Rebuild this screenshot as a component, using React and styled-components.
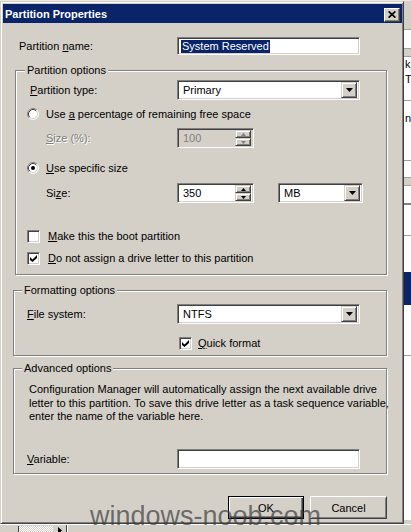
import React from "react";
import styled, { createGlobalStyle, css } from "styled-components";

const GlobalStyle = createGlobalStyle`
  html, body {
    margin: 0;
    padding: 0;
    background: #d4d0c8;
  }
  body {
    font-family: "Liberation Sans", Arial, sans-serif;
    font-size: 11px;
    color: #000;
  }
`;

const raised = css`
  background: #d4d0c8;
  border: 1px solid;
  border-color: #d4d0c8 #404040 #404040 #d4d0c8;
  box-shadow: inset 1px 1px #fff, inset -1px -1px #808080;
`;

const sunken = css`
  border: 1px solid;
  border-color: #808080 #fff #fff #808080;
  box-shadow: inset 1px 1px #404040, inset -1px -1px #d4d0c8;
`;

// bands of the window that sits behind the dialog
const backdropBands = [
  { h: 28, bg: "#d4d0c8" },
  { h: 19, bg: "#fff", line: true },
  { h: 8, bg: "#d4d0c8", line: true },
  { h: 44, bg: "#fff", line: true, text: ["k", "T"], pad: 0 },
  { h: 60, bg: "#fff", line: true, text: ["n"], pad: 10 },
  { h: 17, bg: "#fff", line: true },
  { h: 8, bg: "#d4d0c8", line: true },
  { h: 18, bg: "#fff", line: true },
  { h: 2, bg: "#808080" },
  { h: 30, bg: "#fff" },
  { h: 37, bg: "#fff", line: true },
  { h: 33, bg: "#0a246a" },
  { h: 50, bg: "#fff" },
  { h: 165, bg: "#fff", line: true },
];

const Screen = styled.div`
  position: relative;
  width: 411px;
  height: 532px;
  overflow: hidden;
  display: flex;
  flex-direction: column;
  background: #d4d0c8;
`;

const TopEdge = styled.div`
  flex: none;
  height: 1px;
  background: #ecebe6;
`;

const Middle = styled.div`
  flex: none;
  display: flex;
  height: 523px;
`;

const Dialog = styled.div`
  flex: none;
  width: 404px;
  box-sizing: border-box;
  display: flex;
  flex-direction: column;
  padding: 2px 1px 2px 2px;
  ${raised}
`;

const TitleBar = styled.div`
  flex: none;
  height: 19px;
  display: flex;
  align-items: center;
  justify-content: space-between;
  padding: 0 2px;
  background: #0a246a;
  color: #fff;
`;

const TitleText = styled.span`
  font-weight: bold;
  font-size: 11px;
`;

const CloseButton = styled.div`
  width: 16px;
  height: 14px;
  box-sizing: border-box;
  margin-top: 2px;
  display: flex;
  align-items: center;
  justify-content: center;
  ${css`
    background: #d4d0c8;
    border: 1px solid;
    border-color: #fff #404040 #404040 #fff;
    box-shadow: inset -1px -1px #808080;
  `}
`;

const Body = styled.div`
  flex: 1;
  display: flex;
  flex-direction: column;
  padding: 0 15px 0 10px;
`;

const FieldRow = styled.div`
  flex: none;
  display: flex;
  align-items: center;
  height: ${(p) => p.$h || 20}px;
  margin-top: ${(p) => p.$top || 0}px;
`;

const Label = styled.span`
  flex: none;
  box-sizing: border-box;
  width: ${(p) => p.$w || 150}px;
  padding-left: ${(p) => p.$indent || 0}px;
  white-space: nowrap;
  color: ${(p) => (p.$disabled ? "#808080" : "#000")};
  text-shadow: ${(p) => (p.$disabled ? "1px 1px 0 #fff" : "none")};
`;

const Field = styled.div`
  flex: none;
  box-sizing: border-box;
  width: ${(p) => p.$w}px;
  height: ${(p) => p.$h || 20}px;
  margin-left: ${(p) => p.$gap || 0}px;
  display: flex;
  align-items: center;
  padding: 2px;
  background: ${(p) => (p.$disabled ? "#d4d0c8" : "#fff")};
  ${sunken}
`;

const Value = styled.span`
  flex: 1;
  padding-left: 3px;
  white-space: nowrap;
  color: ${(p) => (p.$disabled ? "#808080" : "#000")};
`;

const Selected = styled.span`
  margin-left: 1px;
  padding: 0 1px;
  line-height: 13px;
  background: #0a246a;
  color: #fff;
`;

const DropButton = styled.div`
  flex: none;
  width: 16px;
  height: 16px;
  box-sizing: border-box;
  display: flex;
  align-items: center;
  justify-content: center;
  ${raised}
`;

const SpinColumn = styled.div`
  flex: none;
  display: flex;
  flex-direction: column;
`;

const SpinButton = styled.div`
  width: 16px;
  height: 8px;
  box-sizing: border-box;
  display: flex;
  align-items: center;
  justify-content: center;
  ${raised}
`;

const Group = styled.div`
  flex: none;
  display: flex;
  flex-direction: column;
  margin-top: ${(p) => p.$top}px;
  margin-left: ${(p) => p.$shift || 0}px;
  padding: 0 0 ${(p) => p.$bottom}px ${(p) => 13 - (p.$shift || 0)}px;
  border: 1px solid #808080;
  box-shadow: inset 1px 1px #fff, 1px 1px #fff;
`;

const GroupTitle = styled.span`
  align-self: flex-start;
  margin: -7px 0 0 ${(p) => p.$x}px;
  padding: 0 2px;
  line-height: 13px;
  background: #d4d0c8;
`;

const OptionRow = styled.div`
  flex: none;
  display: flex;
  align-items: center;
  gap: ${(p) => p.$gap || 7}px;
  height: 14px;
  margin-top: ${(p) => p.$top || 0}px;
  margin-left: ${(p) => p.$left || 0}px;
  white-space: nowrap;
`;

const BoxFrame = styled.div`
  flex: none;
  width: 13px;
  height: 13px;
  box-sizing: border-box;
  display: flex;
  align-items: center;
  justify-content: center;
  background: #fff;
  ${sunken}
`;

const Paragraph = styled.p`
  margin: 8px 0 0 2px;
  line-height: 13.5px;
  white-space: nowrap;
`;

const ButtonRow = styled.div`
  flex: none;
  display: flex;
  justify-content: flex-end;
  gap: 6px;
  margin-top: 22px;
`;

const PushButton = styled.div`
  width: ${(p) => p.$w}px;
  height: 23px;
  box-sizing: border-box;
  display: flex;
  align-items: center;
  justify-content: center;
  background: #d4d0c8;
  border: 1px solid;
  ${(p) =>
    p.$default
      ? css`
          border-color: #000;
          box-shadow: inset 1px 1px #fff, inset -1px -1px #404040, inset -2px -2px #808080;
        `
      : css`
          border-color: #fff #404040 #404040 #fff;
          box-shadow: inset 1px 1px #d4d0c8, inset -1px -1px #808080;
        `}
`;

const Backdrop = styled.div`
  flex: 1;
  display: flex;
  flex-direction: column;
  overflow: hidden;
  background: #d4d0c8;
`;

const Band = styled.div`
  flex: none;
  height: ${(p) => p.$h}px;
  box-sizing: border-box;
  padding: ${(p) => p.$pad || 0}px 0 0 1px;
  background: ${(p) => p.$bg};
  border-top: ${(p) => (p.$line ? "1px solid #a0a0a0" : "none")};
  line-height: 15px;
  overflow: hidden;
`;

const BottomEdge = styled.div`
  flex: 1;
  display: flex;
  align-items: stretch;
  padding-left: 18px;
  border-top: 1px solid #fff;
`;

const ScrollTrack = styled.div`
  width: 34px;
  margin-top: 1px;
  border-left: 1px solid #404040;
  background: repeating-conic-gradient(#fff 0 25%, #d4d0c8 0 50%) 0 0 / 2px 2px;
`;

const ScrollArrow = styled.div`
  width: 13px;
  display: flex;
  justify-content: center;
  padding-top: 2px;
  border-right: 1px solid #404040;
  box-shadow: 1px 0 #fff;
`;

const Watermark = styled.div`
  position: absolute;
  left: 90px;
  top: 503px;
  font-family: "Liberation Sans", Arial, sans-serif;
  font-size: 27px;
  line-height: 27px;
  color: rgba(60, 60, 60, 0.7);
  white-space: nowrap;
  pointer-events: none;
`;

const CloseGlyph = () => (
  <svg width="8" height="7" viewBox="0 0 8 7">
    <path d="M0.6 0.4 L7.4 6.6 M7.4 0.4 L0.6 6.6" stroke="#000" strokeWidth="1.7" />
  </svg>
);

const DownArrow = () => (
  <svg width="7" height="4" viewBox="0 0 7 4">
    <polygon points="0,0 7,0 3.5,4" fill="#000" />
  </svg>
);

const SpinArrow = ({ up, disabled }) => (
  <svg width="5" height="3" viewBox="0 0 5 3">
    <polygon points={up ? "0,3 5,3 2.5,0" : "0,0 5,0 2.5,3"} fill={disabled ? "#808080" : "#000"} />
  </svg>
);

const Radio = ({ checked }) => (
  <svg width="12" height="12" viewBox="0 0 12 12" style={{ flex: "none" }}>
    <circle cx="6" cy="6" r="5" fill="#fff" />
    <path d="M2.11 9.89 A5.5 5.5 0 0 1 9.89 2.11" fill="none" stroke="#808080" />
    <path d="M9.89 2.11 A5.5 5.5 0 0 1 2.11 9.89" fill="none" stroke="#fff" />
    <path d="M2.82 9.18 A4.5 4.5 0 0 1 9.18 2.82" fill="none" stroke="#404040" />
    <path d="M9.18 2.82 A4.5 4.5 0 0 1 2.82 9.18" fill="none" stroke="#d4d0c8" />
    {checked && <circle cx="6" cy="6" r="2" fill="#000" />}
  </svg>
);

const CheckBox = ({ checked }) => (
  <BoxFrame>
    {checked && (
      <svg width="7" height="7" viewBox="0 0 7 7">
        <polygon points="0,2 2.5,4.5 7,0 7,3 2.5,7 0,5" fill="#000" />
      </svg>
    )}
  </BoxFrame>
);

const Dropdown = ({ width, value, gap }) => (
  <Field $w={width} $gap={gap}>
    <Value>{value}</Value>
    <DropButton>
      <DownArrow />
    </DropButton>
  </Field>
);

const Spinner = ({ width, value, disabled }) => (
  <Field $w={width} $disabled={disabled}>
    <Value $disabled={disabled}>{value}</Value>
    <SpinColumn>
      <SpinButton>
        <SpinArrow up disabled={disabled} />
      </SpinButton>
      <SpinButton>
        <SpinArrow disabled={disabled} />
      </SpinButton>
    </SpinColumn>
  </Field>
);

export default function App() {
  return (
    <>
      <GlobalStyle />
      <Screen>
        <TopEdge />
        <Middle>
          <Dialog>
            <TitleBar>
              <TitleText>Partition Properties</TitleText>
              <CloseButton>
                <CloseGlyph />
              </CloseButton>
            </TitleBar>
            <Body>
              <FieldRow $top={14} $h={18}>
                <Label $w={164} $indent={6}>
                  Partition <u>n</u>ame:
                </Label>
                <Field $w={183} $h={18}>
                  <Selected>System Reserved</Selected>
                </Field>
              </FieldRow>

              <Group $top={15} $shift={2} $bottom={9}>
                <GroupTitle $x={-2}>Partition options</GroupTitle>
                <FieldRow $top={3}>
                  <Label $indent={3}>
                    <u>P</u>artition type:
                  </Label>
                  <Dropdown width={183} value="Primary" />
                </FieldRow>
                <OptionRow $top={7}>
                  <Radio />
                  <span>
                    Use <u>a</u> percentage of remaining free space
                  </span>
                </OptionRow>
                <FieldRow $top={7}>
                  <Label $indent={19} $disabled>
                    <u>S</u>ize (%):
                  </Label>
                  <Spinner width={77} value="100" disabled />
                </FieldRow>
                <OptionRow $top={13}>
                  <Radio checked />
                  <span>
                    <u>U</u>se specific size
                  </span>
                </OptionRow>
                <FieldRow $top={8}>
                  <Label $indent={19}>
                    Si<u>z</u>e:
                  </Label>
                  <Spinner width={77} value="350" />
                  <Dropdown width={85} value="MB" gap={24} />
                </FieldRow>
                <OptionRow $top={26} $gap={8}>
                  <CheckBox />
                  <span>
                    <u>M</u>ake this the boot partition
                  </span>
                </OptionRow>
                <OptionRow $top={8} $gap={8}>
                  <CheckBox checked />
                  <span>
                    <u>D</u>o not assign a drive letter to this partition
                  </span>
                </OptionRow>
              </Group>

              <Group $top={15} $bottom={5}>
                <GroupTitle $x={-5}>Formatting options</GroupTitle>
                <FieldRow $top={7}>
                  <Label>
                    <u>F</u>ile system:
                  </Label>
                  <Dropdown width={183} value="NTFS" />
                </FieldRow>
                <OptionRow $top={12} $left={152} $gap={6}>
                  <CheckBox checked />
                  <span>
                    <u>Q</u>uick format
                  </span>
                </OptionRow>
              </Group>

              <Group $top={12} $bottom={4}>
                <GroupTitle $x={-5}>Advanced options</GroupTitle>
                <Paragraph>
                  Configuration Manager will automatically assign the next available drive
                  <br />
                  letter to this partition. To save this drive letter as a task sequence variable,
                  <br />
                  enter the name of the variable here.
                </Paragraph>
                <FieldRow $top={25.5}>
                  <Label>
                    <u>V</u>ariable:
                  </Label>
                  <Field $w={183} />
                </FieldRow>
              </Group>

              <ButtonRow>
                <PushButton $w={76} $default>
                  OK
                </PushButton>
                <PushButton $w={77}>Cancel</PushButton>
              </ButtonRow>
            </Body>
          </Dialog>

          <Backdrop>
            {backdropBands.map((band, i) => (
              <Band key={i} $h={band.h} $bg={band.bg} $line={band.line} $pad={band.pad}>
                {band.text &&
                  band.text.map((t) => (
                    <div key={t}>{t}</div>
                  ))}
              </Band>
            ))}
          </Backdrop>
        </Middle>

        <BottomEdge>
          <ScrollTrack />
          <ScrollArrow>
            <svg width="4" height="7" viewBox="0 0 4 7">
              <polygon points="0,0 4,3.5 0,7" fill="#000" />
            </svg>
          </ScrollArrow>
        </BottomEdge>

        <Watermark>windows-noob.com</Watermark>
      </Screen>
    </>
  );
}
